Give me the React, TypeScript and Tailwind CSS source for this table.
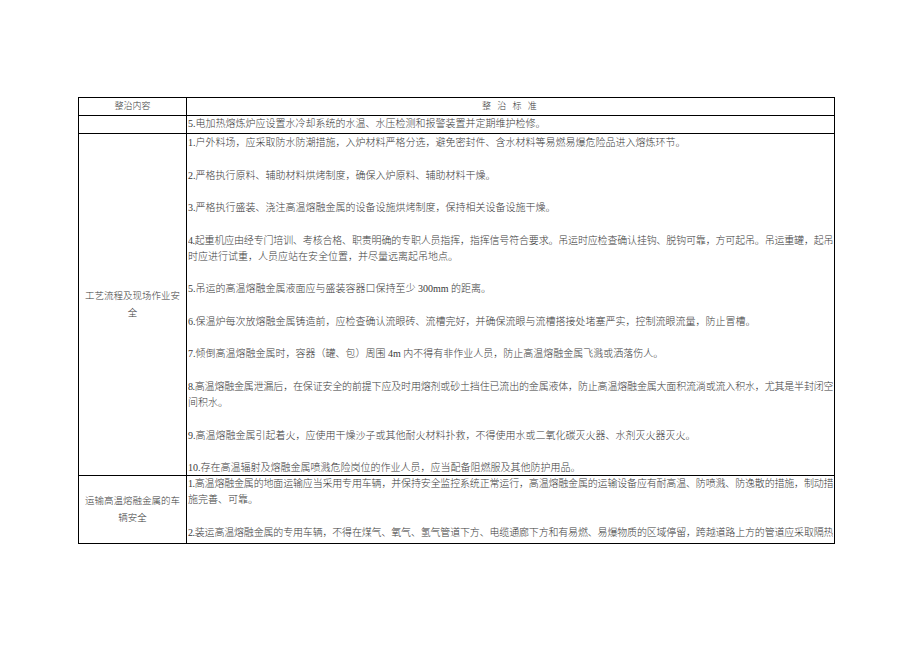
const font = "font-['Liberation_Serif','Noto_Sans_CJK_SC',serif]";

// each entry is one visual line; full = stretched to the cell edge (justified)
type Line = { text: string; full?: boolean };
type Para = Line[];

const processParas: Para[] = [
  [{ text: '1.户外料场，应采取防水防潮措施，入炉材料严格分选，避免密封件、含水材料等易燃易爆危险品进入熔炼环节。' }],
  [{ text: '2.严格执行原料、辅助材料烘烤制度，确保入炉原料、辅助材料干燥。' }],
  [{ text: '3.严格执行盛装、浇注高温熔融金属的设备设施烘烤制度，保持相关设备设施干燥。' }],
  [
    { text: '4.起重机应由经专门培训、考核合格、职责明确的专职人员指挥，指挥信号符合要求。吊运时应检查确认挂钩、脱钩可靠，方可起吊。吊运重罐，起吊', full: true },
    { text: '时应进行试重，人员应站在安全位置，并尽量远离起吊地点。' },
  ],
  [{ text: '5.吊运的高温熔融金属液面应与盛装容器口保持至少 300mm 的距离。' }],
  [{ text: '6.保温炉每次放熔融金属铸造前，应检查确认流眼砖、流槽完好，并确保流眼与流槽搭接处堵塞严实，控制流眼流量，防止冒槽。' }],
  [{ text: '7.倾倒高温熔融金属时，容器（罐、包）周围 4m 内不得有非作业人员，防止高温熔融金属飞溅或洒落伤人。' }],
  [
    { text: '8.高温熔融金属泄漏后，在保证安全的前提下应及时用熔剂或砂土挡住已流出的金属液体，防止高温熔融金属大面积流淌或流入积水，尤其是半封闭空', full: true },
    { text: '间积水。' },
  ],
  [{ text: '9.高温熔融金属引起着火，应使用干燥沙子或其他耐火材料扑救，不得使用水或二氧化碳灭火器、水剂灭火器灭火。' }],
  [{ text: '10.存在高温辐射及熔融金属喷溅危险岗位的作业人员，应当配备阻燃服及其他防护用品。' }],
];

const vehicleParas: Para[] = [
  [
    { text: '1.高温熔融金属的地面运输应当采用专用车辆，并保持安全监控系统正常运行，高温熔融金属的运输设备应有耐高温、防喷溅、防逸散的措施，制动措', full: true },
    { text: '施完善、可靠。' },
  ],
  [{ text: '2.装运高温熔融金属的专用车辆，不得在煤气、氧气、氢气管道下方、电缆通廊下方和有易燃、易爆物质的区域停留，跨越道路上方的管道应采取隔热', full: true }],
];

function Paragraphs({ paras }: { paras: Para[] }) {
  return (
    <div className="flex flex-col gap-[16.25px]">
      {paras.map((p, i) => (
        <div key={i}>
          {p.map((l, j) => (
            <div
              key={j}
              className={
                l.full
                  ? 'overflow-hidden whitespace-nowrap tracking-[-0.6px] text-justify [text-align-last:justify]'
                  : 'whitespace-nowrap'
              }
            >
              {l.text}
            </div>
          ))}
        </div>
      ))}
    </div>
  );
}

function Label({ lines }: { lines: string[] }) {
  return (
    <div className="flex flex-1 items-center justify-center border-r border-black text-center text-[9.5px]">
      <div>
        {lines.map((l) => (
          <div key={l} className="whitespace-nowrap">{l}</div>
        ))}
      </div>
    </div>
  );
}

export default function App() {
  return (
    <div className={`min-h-[651px] bg-white pt-[97px] pl-[78px] text-[10px] font-light leading-[16.25px] text-[#3a3a3a] ${font}`}>
      <div className="grid w-[757px] grid-cols-[108px_1fr] border border-black">
        {/* header */}
        <div className="flex h-[18px] items-center justify-center border-b border-r border-black text-[9px]">整治内容</div>
        <div className="flex h-[18px] items-center justify-center border-b border-black text-[9px] tracking-[2px] whitespace-pre">整 治 标 准</div>

        {/* row 2 */}
        <div className="h-[18px] border-b border-r border-black" />
        <div className="flex h-[18px] items-center border-b border-black pl-[1px]">
          5.电加热熔炼炉应设置水冷却系统的水温、水压检测和报警装置并定期维护检修。
        </div>

        {/* process safety */}
        <div className="flex border-b border-black">
          <Label lines={['工艺流程及现场作业安', '全']} />
        </div>
        <div className="h-[342px] min-w-0 border-b border-black px-[1px] pt-[1px]">
          <Paragraphs paras={processParas} />
        </div>

        {/* vehicle safety */}
        <div className="flex">
          <Label lines={['运输高温熔融金属的车', '辆安全']} />
        </div>
        <div className="h-[67px] min-w-0 overflow-hidden px-[1px]">
          <Paragraphs paras={vehicleParas} />
        </div>
      </div>
    </div>
  );
}
